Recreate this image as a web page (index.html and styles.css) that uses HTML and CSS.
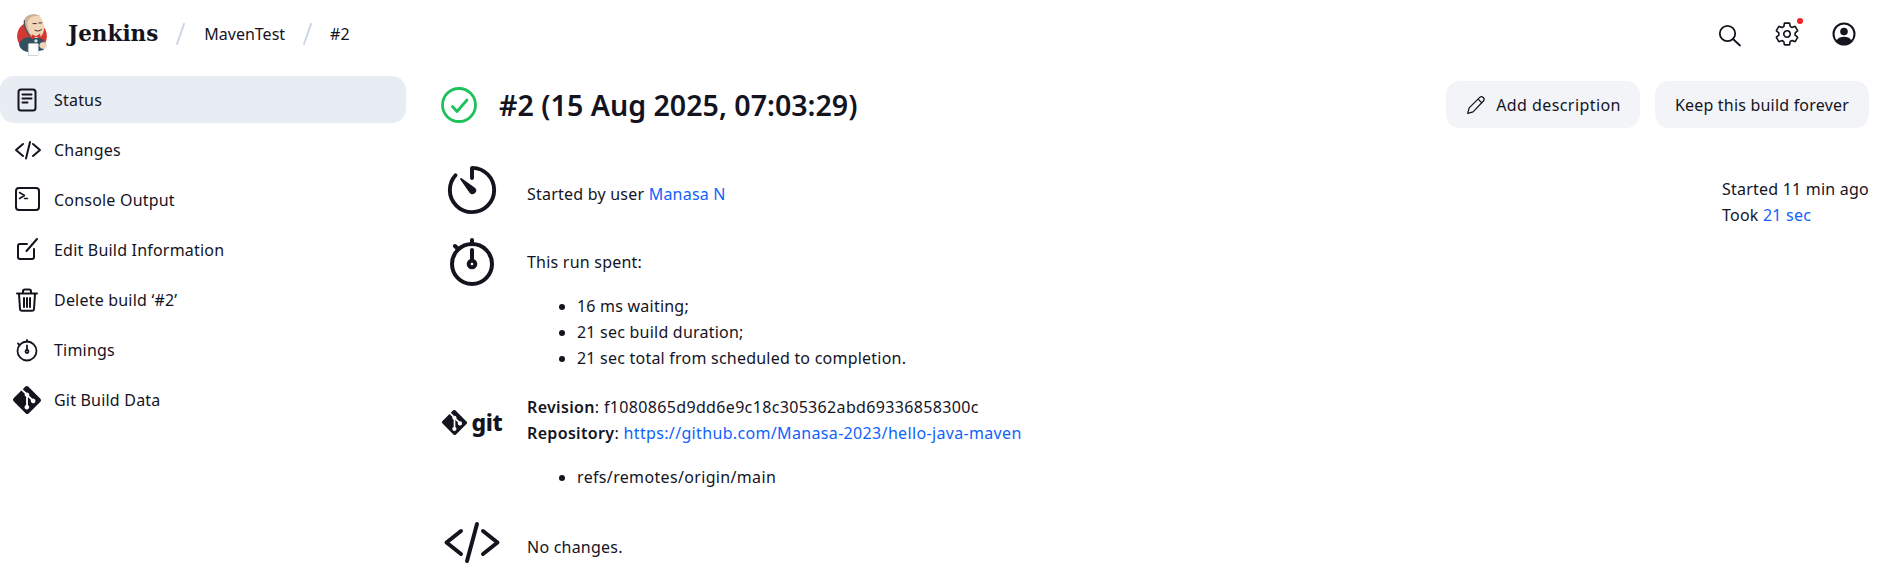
FILE: index.html
```html
<!DOCTYPE html>
<html lang="en">
<head>
<meta charset="utf-8">
<title>#2 - MavenTest - Jenkins</title>
<link rel="stylesheet" href="styles.css">
</head>
<body>
<header class="topbar">
  <a class="brand">
    <svg class="logo" viewBox="0 0 90 130" width="30" height="43">
      <ellipse cx="45" cy="70" rx="45" ry="44" fill="#d33833"/>
      <path d="M6 95C12 74 34 70 47 76C62 70 82 76 84 92L80 112L62 116V128H34V118C20 116 8 108 6 95Z" fill="#335061"/>
      <path d="M22 20C28 4 58-2 72 14C82 26 84 50 78 62C72 76 54 80 42 70C32 62 20 38 22 20Z" fill="#f0d6b7"/>
      <path d="M22 20C26 6 52-2 70 10C52 6 36 12 32 26C30 38 34 50 38 64C28 52 20 36 22 20Z" fill="#c9b299"/>
      <path d="M22 22C20 36 28 56 40 70" fill="none" stroke="#49525c" stroke-width="4"/>
      <path d="M48 32h10M66 30h8M54 52c6 4 14 3 20-2" fill="none" stroke="#3d2c24" stroke-width="3" stroke-linecap="round"/>
      <path d="M44 64l13 6 13-8v14l-13-4-13 8z" fill="#d33833"/>
      <circle cx="57" cy="84" r="5" fill="#dce3ea"/>
      <rect x="34" y="92" width="30" height="36" rx="3" fill="#fff" stroke="#c9c9c9" stroke-width="1.500"/>
      <path d="M68 98c0-8 10-12 18-8 5 4 3 14-3 17-7 3-15-2-15-9z" fill="#f0d6b7" stroke="#d5d5d5" stroke-width="1.500"/>
    </svg>
    <span class="brand-name">Jenkins</span>
  </a>
  <svg class="sep" viewBox="0 0 9 22" width="9" height="22"><path d="M8 1L1 21"/></svg>
  <a class="crumb">MavenTest</a>
  <svg class="sep" viewBox="0 0 9 22" width="9" height="22"><path d="M8 1L1 21"/></svg>
  <a class="crumb">#2</a>
  <nav class="top-icons">
    <a class="top-icon">
      <svg viewBox="0 0 24 24" width="24" height="24" class="ico search"><circle cx="9.500" cy="11.500" r="7.700"/><path d="M15 17l7 6.500"/></svg>
    </a>
    <a class="top-icon">
      <svg viewBox="0 0 512 512" width="26" height="26" class="gear"><path d="M262.290 192.310a64 64 0 1057.400 57.400 64.130 64.130 0 00-57.400-57.400zM416.390 256a154.340 154.340 0 01-1.530 20.790l45.210 35.460a10.810 10.810 0 012.450 13.750l-42.770 74a10.810 10.810 0 01-13.140 4.590l-44.900-18.080a16.110 16.110 0 00-15.170 1.750A164.480 164.480 0 01325 400.800a15.940 15.940 0 00-8.820 12.140l-6.730 47.890a11.080 11.080 0 01-10.680 9.170h-85.540a11.110 11.110 0 01-10.690-8.870l-6.720-47.820a16.070 16.070 0 00-9-12.220 155.300 155.300 0 01-21.460-12.570 16 16 0 00-15.110-1.710l-44.890 18.070a10.810 10.810 0 01-13.140-4.580l-42.770-74a10.800 10.800 0 012.450-13.750l38.210-30a16.050 16.050 0 006-14.080c-.36-4.170-.58-8.330-.58-12.500s.21-8.270.58-12.350a16 16 0 00-6.070-13.940l-38.190-30A10.810 10.810 0 0149.480 186l42.770-74a10.810 10.810 0 0113.140-4.590l44.900 18.080a16.110 16.110 0 0015.170-1.750A164.480 164.480 0 01187 111.200a15.940 15.940 0 008.820-12.140l6.730-47.890A11.080 11.080 0 01213.230 42h85.540a11.110 11.110 0 0110.690 8.870l6.720 47.820a16.070 16.070 0 009 12.220 155.300 155.300 0 0121.460 12.570 16 16 0 0015.110 1.710l44.890-18.070a10.810 10.810 0 0113.140 4.580l42.770 74a10.800 10.800 0 01-2.450 13.750l-38.210 30a16.050 16.050 0 00-6.050 14.080c.33 4.140.55 8.300.55 12.470z"/></svg>
      <span class="dot"></span>
    </a>
    <a class="top-icon">
      <svg viewBox="0 0 24 24" width="24" height="24"><circle cx="12" cy="12" r="10.500" fill="none" stroke="#14141f" stroke-width="2"/><circle cx="12" cy="9.500" r="3.800" fill="#14141f"/><path d="M4.500 18.500C6.500 15.500 9 14.800 12 14.800s5.500.7 7.500 3.700C17.500 21 15 22 12 22s-5.500-1-7.500-3.500z" fill="#14141f"/></svg>
    </a>
  </nav>
</header>
<div class="layout">
  <aside class="side">
    <a class="task active">
      <svg viewBox="0 0 24 24" class="ico task-ico"><rect x="3.500" y="1.500" width="17" height="21" rx="2.500"/><path d="M7.500 6.500h9M7.500 10.500h9M7.500 14.500h5"/></svg>
      <span>Status</span>
    </a>
    <a class="task">
      <svg viewBox="0 0 24 24" class="ico task-ico"><path d="M8 6L1 12l7 6M18 6l7 6-7 6M15 4L11 20.500"/></svg>
      <span>Changes</span>
    </a>
    <a class="task">
      <svg viewBox="0 0 24 24" class="ico task-ico"><rect x="1" y="0" width="23" height="22" rx="3"/><path d="M4.500 4.500l5 3-5 3M9.500 10.500h3" stroke-width="1.500"/></svg>
      <span>Console Output</span>
    </a>
    <a class="task">
      <svg viewBox="0 0 24 24" class="ico task-ico"><path d="M12 6H5a2 2 0 0 0-2 2v11a2 2 0 0 0 2 2h12a2 2 0 0 0 2-2v-8M11.500 13L22 1"/></svg>
      <span>Edit Build Information</span>
    </a>
    <a class="task">
      <svg viewBox="0 0 24 24" class="ico task-ico"><path d="M3 5.500h20M9 5V3.300C9 2.300 10 1.500 11 1.500h4c1 0 2 .8 2 1.800V5M5 6l1 15c.1 1 1 1.800 2 1.800h10c1 0 1.900-.8 2-1.800l1-15M10 10v9M13 10v9M16 10v9" transform="translate(-1 0)"/></svg>
      <span>Delete build ‘#2’</span>
    </a>
    <a class="task">
      <svg viewBox="0 0 48 48" class="ico task-ico timer"><circle cx="24" cy="26" r="19"/><path d="M24 7V4M6 11l3 3M24 15v9"/><circle cx="24" cy="27" r="3"/></svg>
      <span>Timings</span>
    </a>
    <a class="task">
      <svg viewBox="0 0 24 24" class="task-ico git-ico"><path fill="#14141f" d="M23.500 11L13 .5a1.700 1.700 0 0 0-2.400 0L8.400 2.700l2.900 2.900a2 2 0 0 1 2.500 2.500l2.800 2.800a2 2 0 1 1-1.200 1.100l-2.600-2.600v6.900a2 2 0 1 1-1.600-.100V9.200a2 2 0 0 1-1.100-2.600L7.200 3.900.5 10.600a1.700 1.700 0 0 0 0 2.400L11 23.500a1.700 1.700 0 0 0 2.400 0L23.500 13.400a1.700 1.700 0 0 0 0-2.400z"/></svg>
      <span>Git Build Data</span>
    </a>
  </aside>
  <main class="content">
    <div class="head">
      <svg class="status" viewBox="0 0 36 36" width="36" height="36"><circle cx="18" cy="18" r="16.500" fill="none" stroke="#1ec25a" stroke-width="2.800"/><path d="M11.500 19.500l4.500 5 10-11.500" fill="none" stroke="#1ec25a" stroke-width="2.800" stroke-linecap="round" stroke-linejoin="round"/></svg>
      <h1 class="title">#2 (15 Aug 2025, 07:03:29)</h1>
      <div class="actions">
        <a class="btn btn-add">
          <svg viewBox="0 0 24 24" width="20" height="20" class="ico thin"><path d="M2 22l1.800-6.500L16.500 2.800c1-1 3-1 4.200.2s1.300 3 .2 4.200L8.500 20.200 2 22zM14.500 5l4.500 4.500"/></svg>
          <span>Add description</span>
        </a>
        <a class="btn">Keep this build forever</a>
      </div>
    </div>
    <div class="body">
      <div class="rows">
        <section class="row row-started">
          <svg class="ico icon-48" viewBox="48 48 416 416" width="48" height="48"><path stroke-width="34" d="M112.910 128A191.850 191.850 0 0064 254c-1.180 106.350 85.650 193.800 192 194 106.200.2 192-85.830 192-192 0-104.540-83.550-189.610-187.500-192a4.360 4.360 0 00-4.500 4.370V152"/><path fill="#14141f" stroke="none" d="M233.380 278.630l-79-113a8.130 8.130 0 0111.320-11.320l113 79a32.500 32.500 0 01-37.250 53.260 33.210 33.210 0 01-8.070-7.940z"/></svg>
          <p class="row-text">Started by user <a class="link">Manasa N</a></p>
        </section>
        <section class="row row-spent">
          <svg class="ico icon-48 timer-big" viewBox="0 0 48 48" width="48" height="48"><circle cx="24" cy="26" r="20"/><path d="M24 6V2M7 8l2.500 2.500M24 12v10"/><circle cx="24" cy="26" r="3.300"/></svg>
          <div class="row-text">
            <p>This run spent:</p>
            <ul>
              <li>16 ms waiting;</li>
              <li>21 sec build duration;</li>
              <li>21 sec total from scheduled to completion.</li>
            </ul>
          </div>
        </section>
        <section class="row row-git">
          <div class="git-logo">
            <svg viewBox="0 0 24 24" width="25" height="25"><path fill="#14141f" d="M23.500 11L13 .5a1.700 1.700 0 0 0-2.400 0L8.400 2.700l2.900 2.900a2 2 0 0 1 2.500 2.500l2.800 2.800a2 2 0 1 1-1.200 1.100l-2.600-2.600v6.900a2 2 0 1 1-1.600-.100V9.200a2 2 0 0 1-1.100-2.600L7.200 3.900.5 10.600a1.700 1.700 0 0 0 0 2.400L11 23.500a1.700 1.700 0 0 0 2.400 0L23.500 13.400a1.700 1.700 0 0 0 0-2.400z"/></svg>
            <span class="git-word">git</span>
          </div>
          <div class="row-text git-text">
            <p><b>Revision</b>: f1080865d9dd6e9c18c305362abd69336858300c</p>
            <p><b>Repository</b>: <a class="link">https://github.com/Manasa-2023/hello-java-maven</a></p>
            <ul>
              <li>refs/remotes/origin/main</li>
            </ul>
          </div>
        </section>
        <section class="row row-changes">
          <svg class="ico" viewBox="0 0 56 41" width="56" height="41"><path stroke-width="4" d="M17 9L2.500 20.500 17 32M39 9l14.500 11.500L39 32M33 2L23 39"/></svg>
          <p class="row-text">No changes.</p>
        </section>
      </div>
      <aside class="timing">
        <p>Started 11 min ago</p>
        <p>Took <a class="link">21 sec</a></p>
      </aside>
    </div>
  </main>
</div>
</body>
</html>
```

FILE: styles.css
```css
* { box-sizing: border-box; }
html, body { margin: 0; padding: 0; }
body {
  background: #fff;
  color: #14141f;
  font-family: "Noto Sans", "Open Sans", sans-serif;
  font-size: 16px;
  letter-spacing: .22px;
  line-height: 26px;
  height: 578px;
  overflow: hidden;
}
p { margin: 0; }
a { color: inherit; text-decoration: none; }
.link { color: #0f62fe; }
.ico { fill: none; stroke: #14141f; stroke-width: 2; stroke-linecap: round; stroke-linejoin: round; overflow: visible; }
.ico.thin { stroke-width: 1.500; }
.ico.search { stroke-width: 1.800; }
.ico.timer { stroke-width: 3.600; }
.ico.timer-big { stroke-width: 4; }
.gear { display: block; margin: -1px; fill: none; stroke: #14141f; stroke-width: 32; stroke-linecap: round; stroke-linejoin: round; }

.topbar { display: flex; align-items: center; height: 68px; padding-right: 25px; }
.brand { display: flex; align-items: center; gap: 21px; padding-left: 17px; }
.logo { display: block; }
.brand-name {
  font-family: "DejaVu Serif", "Liberation Serif", serif;
  font-weight: 700;
  font-size: 21.500px;
  letter-spacing: 0;
}
.sep { flex: none; margin: 0 19px 0 18px; fill: none; stroke: #ccd6e6; stroke-width: 2; stroke-linecap: round; }
.crumb { letter-spacing: 0; }
.crumb + .sep { margin-right: 18px; }
.top-icons { margin-left: auto; display: flex; gap: 33px; }
.top-icon { position: relative; display: block; width: 24px; height: 24px; }
.dot { position: absolute; top: -4px; right: -4px; width: 6px; height: 6px; border-radius: 50%; background: #f4202a; }

.layout { display: flex; margin-top: 8px; }
.side { width: 406px; flex: none; letter-spacing: .2px; }
.task { display: flex; align-items: center; height: 47px; margin-bottom: 3px; padding-left: 15px; border-radius: 14px; gap: 15px; }
.task.active { background: #e8ecf3; }
.task-ico { width: 24px; height: 24px; flex: none; overflow: visible; }
.git-ico { width: 28px; height: 28px; margin: 0 -2px; }

.content { flex: 1; padding: 0 12px 0 35px; min-width: 0; }
.head { display: flex; align-items: center; height: 57px; }
.status { margin-right: 22px; flex: none; }
.title { font-size: 28.600px; font-weight: 600; margin: 0; line-height: 40px; letter-spacing: 0; }
.actions { margin-left: auto; display: flex; gap: 15px; }
.btn { display: flex; align-items: center; gap: 10px; height: 47px; padding: 0 20px; border-radius: 14px; background: #f2f4f7; letter-spacing: .2px; }
.btn-add { letter-spacing: .43px; padding-right: 19px; }

.body { display: flex; justify-content: space-between; margin-top: 33px; }
.row { display: grid; grid-template-columns: 62px 1fr; column-gap: 24px; justify-items: center; align-items: start; }
.row-text { justify-self: start; white-space: nowrap; }
.row-started .row-text { padding-top: 15px; }
.row-spent { margin-top: 24px; }
.row-spent .row-text { padding-top: 11px; }
ul { margin: 18px 0 0; padding-left: 50px; }
li { line-height: 26px; }
.row-git { margin-top: 23px; }
.git-text { letter-spacing: .34px; }
.git-logo { display: flex; align-items: center; gap: 5px; height: 56px; }
.git-word { font-weight: 800; font-size: 23px; line-height: 30px; letter-spacing: -.4px; }
b { font-weight: 600; }
.row-changes { margin-top: 32px; }
.row-changes .row-text { padding-top: 12px; }
.timing { padding-top: 10px; flex: none; white-space: nowrap; width: 147px; }
```
